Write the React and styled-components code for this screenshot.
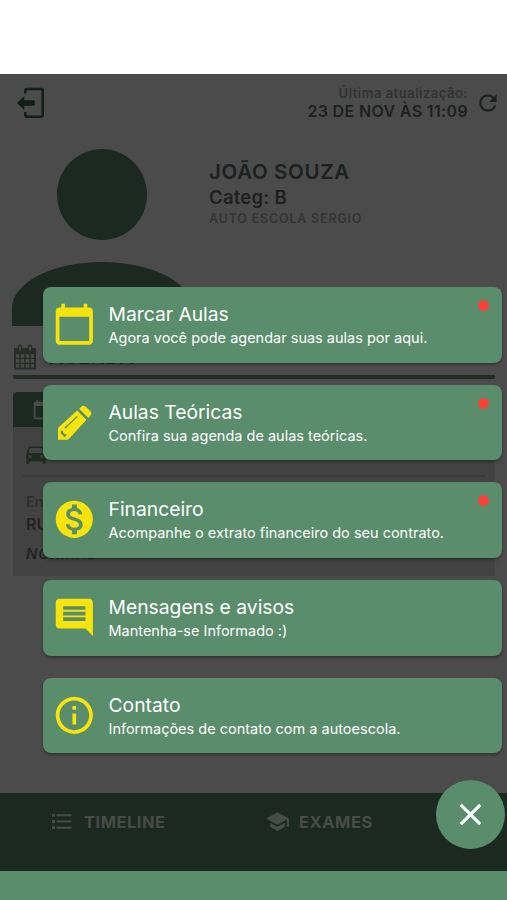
import React, { useState } from 'react';
import styled, { createGlobalStyle } from 'styled-components';
import {
    MdCalendarToday,
    MdMonetizationOn,
    MdInsertComment,
    MdInfoOutline,
    MdRefresh,
    MdSchool,
    MdDirectionsCar,
    MdClose,
} from 'react-icons/md';

const ExitIcon = () => (
    <svg width='28' height='32' viewBox='0 0 28 32'>
        <path
            d='M8.300 6.500V4a2 2 0 0 1 2-2h13.400a2 2 0 0 1 2 2v23.700a2 2 0 0 1-2 2H10.300a2 2 0 0 1-2-2V25'
            fill='none'
            stroke='#111f17'
            strokeWidth='2.6'
        />
        <path
            d='M0 16L7.200 9V13.200H17.700v5.600H7.200V23z'
            fill='#111f17'
        />
    </svg>
);

const CalendarGridIcon = () => (
    <svg width='24' height='26' viewBox='0 0 24 26'>
        <path
            d='M2 5h20v19.500h-20z'
            fill='none'
            stroke='#272c27'
            strokeWidth='2'
            strokeLinejoin='round'
        />
        <path
            d='M2 9.500h20M2 14.400h20M2 19.400h20M7 9v15M12 9v15M17 9v15'
            stroke='#272c27'
            strokeWidth='1.4'
        />
        <path d='M2 5h20v4H2z' fill='#272c27' />
        <path
            d='M7 2.800v3M17 2.800v3'
            stroke='#272c27'
            strokeWidth='4.600'
            strokeLinecap='round'
        />
        <path
            d='M7 3v3M17 3v3'
            stroke='#4b4b4b'
            strokeWidth='1.8'
            strokeLinecap='round'
        />
    </svg>
);

const ListIcon = () => (
    <svg width='20' height='17' viewBox='0 0 20 17'>
        <path
            d='M0 2.200h3M0 8.500h3M0 14.800h3'
            stroke='#474c48'
            strokeWidth='3'
        />
        <path
            d='M4.500 2.200h15M4.500 8.500h15M4.500 14.800h15'
            stroke='#474c48'
            strokeWidth='2'
        />
    </svg>
);

const PencilIcon = ({ size }) => (
    <svg width={size} height={size} viewBox='0 0 106 106'>
        <path
            d='M61 17L89 45L38 101Q35 105 31 105H3V75Q3 70 6 67z'
            fill='currentColor'
        />
        <path
            d='M67 11L75 4Q81 0 87 5L101 19Q107 25 102 31L95 39z'
            fill='currentColor'
        />
        <path
            d='M25 69L61 35'
            stroke='#5a8d6c'
            strokeWidth='3.5'
            strokeLinecap='round'
        />
        <path
            d='M11 79L17 77L20 86L29 89L27 95L21 97L18 91L12 88z'
            fill='#5a8d6c'
        />
    </svg>
);

const MENU_ITEMS = [
    {
        icon: MdCalendarToday,
        size: 44.6,
        title: 'Marcar Aulas',
        text: 'Agora você pode agendar suas aulas por aqui.',
        unread: true,
    },
    {
        icon: PencilIcon,
        size: 35,
        title: 'Aulas Teóricas',
        text: 'Confira sua agenda de aulas teóricas.',
        unread: true,
    },
    {
        icon: MdMonetizationOn,
        size: 44.6,
        title: 'Financeiro',
        text: 'Acompanhe o extrato financeiro do seu contrato.',
        unread: true,
    },
    {
        icon: MdInsertComment,
        size: 44.6,
        title: 'Mensagens e avisos',
        text: 'Mantenha-se Informado :)',
    },
    {
        icon: MdInfoOutline,
        size: 44.6,
        title: 'Contato',
        text: 'Informações de contato com a autoescola.',
    },
];

const App = () => {
    const [menuOpen, setMenuOpen] = useState(true);

    return (
        <>
            <GlobalStyle />
            <Screen>
                <StatusBar />
                <Content>
                    <Header>
                        <ExitIcon />
                        <Update>
                            <UpdateText>
                                <UpdateLabel>Última atualização:</UpdateLabel>
                                <UpdateDate>23 DE NOV ÀS 11:09</UpdateDate>
                            </UpdateText>
                            <MdRefresh size={26} />
                        </Update>
                    </Header>
                    <Profile>
                        <Avatar>
                            <AvatarHead />
                            <AvatarBody />
                        </Avatar>
                        <ProfileInfo>
                            <Name>JOÃO SOUZA</Name>
                            <Category>Categ: B</Category>
                            <School>AUTO ESCOLA SERGIO</School>
                        </ProfileInfo>
                    </Profile>
                    <SectionTitle>
                        <CalendarGridIcon />
                        <span>AGENDA</span>
                    </SectionTitle>
                    <LessonCard>
                        <LessonHeader>
                            <MdCalendarToday size={21} />
                        </LessonHeader>
                        <LessonType>
                            <MdDirectionsCar size={26} />
                        </LessonType>
                        <LessonBody>
                            <LessonLabel>Endereço:</LessonLabel>
                            <LessonPlace>RUA</LessonPlace>
                            <LessonStatus>NORMAL</LessonStatus>
                        </LessonBody>
                    </LessonCard>
                </Content>
                <TabBar>
                    <Tab $width='213px'>
                        <ListIcon />
                        <TabLabel $gap='12px'>TIMELINE</TabLabel>
                    </Tab>
                    <Tab $width='214px'>
                        <MdSchool size={25} />
                        <TabLabel $gap='9px'>EXAMES</TabLabel>
                    </Tab>
                </TabBar>
                <BottomStrip />

                {menuOpen ? (
                    <Menu>
                        {MENU_ITEMS.map((item) => (
                            <MenuItem key={item.title}>
                                <MenuIcon>
                                    <item.icon size={item.size} />
                                </MenuIcon>
                                <MenuText>
                                    <MenuTitle>{item.title}</MenuTitle>
                                    <MenuDescription>
                                        {item.text}
                                    </MenuDescription>
                                </MenuText>
                                {item.unread ? <UnreadDot /> : null}
                            </MenuItem>
                        ))}
                    </Menu>
                ) : null}
                <CloseButton onClick={() => setMenuOpen(!menuOpen)}>
                    <MdClose size={37} />
                </CloseButton>
            </Screen>
        </>
    );
};

export default App;

const GlobalStyle = createGlobalStyle`
    * {
        box-sizing: border-box;
    }

    body {
        margin: 0;
        font-family: Inter, 'Liberation Sans', sans-serif;
    }

    svg {
        display: block;
        flex-shrink: 0;
    }
`;

const Screen = styled.div`
    position: relative;
    display: flex;
    flex-direction: column;
    width: 507px;
    height: 900px;
    overflow: hidden;
    background: #4b4b4b;
`;

const StatusBar = styled.div`
    height: 74px;
    background: #fff;
`;

const Content = styled.main`
    height: 719px;
    padding: 0 12px 0 13px;
`;

const Header = styled.header`
    display: flex;
    justify-content: space-between;
    height: 75px;
    padding: 13px 0 0 4px;
`;

const Update = styled.div`
    display: flex;
    align-items: flex-start;
    margin-right: -6px;
    color: #1c211e;

    svg {
        margin: 3px 0 0 7px;
    }
`;

const UpdateText = styled.div`
    text-align: right;
    font-weight: 600;
`;

const UpdateLabel = styled.div`
    margin-top: -3px;
    font-size: 13px;
    line-height: 18px;
    letter-spacing: 0.5px;
    color: #323232;
`;

const UpdateDate = styled.div`
    font-size: 16px;
    line-height: 18px;
    letter-spacing: 0.35px;
`;

const Profile = styled.section`
    display: flex;
    height: 177px;
`;

const Avatar = styled.div`
    display: flex;
    flex-direction: column;
    align-items: center;
    justify-content: space-between;
    width: 180px;
    margin-left: -1px;
`;

const AvatarHead = styled.div`
    width: 90px;
    height: 91px;
    border-radius: 50%;
    background: #1c2920;
`;

const AvatarBody = styled.div`
    width: 180px;
    height: 64px;
    border-radius: 50% 50% 0 0 / 72% 72% 0 0;
    background: #1c2920;
`;

const ProfileInfo = styled.div`
    padding: 9px 0 0 17px;
`;

const Name = styled.div`
    font-size: 20.5px;
    line-height: 27px;
    font-weight: 600;
    letter-spacing: 0.65px;
    color: #1c211e;
`;

const Category = styled.div`
    font-size: 18.5px;
    line-height: 24px;
    font-weight: 600;
    letter-spacing: 0.25px;
    color: #1f1f1f;
`;

const School = styled.div`
    margin-top: 1px;
    font-size: 12.5px;
    line-height: 18px;
    font-weight: 600;
    letter-spacing: 0.8px;
    color: #343434;
`;

const SectionTitle = styled.div`
    display: flex;
    align-items: center;
    gap: 12px;
    height: 53px;
    padding-top: 12px;
    border-bottom: 4px solid #242c21;
    border-radius: 2px;
    font-size: 20px;
    font-weight: 700;
    color: #1c2920;
`;

const LessonCard = styled.section`
    height: 184px;
    margin-top: 13px;
    background: #424242;
`;

const LessonHeader = styled.div`
    display: flex;
    align-items: center;
    height: 35px;
    padding-left: 19px;
    border-radius: 5px 5px 0 0;
    background: #1c2920;
    color: #4b4b4b;
`;

const LessonType = styled.div`
    height: 50px;
    margin: 0 10px;
    padding-top: 14px;
    border-bottom: 2px solid #393939;
    color: #1e2c1e;
`;

const LessonBody = styled.div`
    padding: 14px 13px 0;
    line-height: 22px;
    color: #222;
`;

const LessonLabel = styled.div`
    font-size: 14.5px;
    font-weight: 500;
    color: #2d2d2d;
`;

const LessonPlace = styled.div`
    font-size: 16px;
    font-weight: 600;
`;

const LessonStatus = styled.div`
    margin-top: 8px;
    font-size: 15px;
    font-weight: 600;
    font-style: italic;
    letter-spacing: 0.8px;
`;

const TabBar = styled.nav`
    display: flex;
    height: 77.5px;
    padding: 16px 0 0 52px;
    background: #1c2920;
`;

const Tab = styled.div`
    display: flex;
    align-items: center;
    width: ${({ $width }) => $width};
    height: 25px;
    color: #474c48;
`;

const TabLabel = styled.span`
    margin-left: ${({ $gap }) => $gap};
    font-size: 16.5px;
    font-weight: 700;
    letter-spacing: 0.5px;
`;

const BottomStrip = styled.div`
    flex: 1;
    background: #5a8d6c;
`;

const Menu = styled.div`
    position: absolute;
    top: 287px;
    left: 43px;
    right: 5px;
    display: flex;
    flex-direction: column;
    gap: 22px;
`;

const MenuItem = styled.div`
    position: relative;
    display: flex;
    align-items: center;
    height: 75.7px;
    border-radius: 8px;
    background: #5a8d6c;
    box-shadow: 0 2px 3px rgba(0, 0, 0, 0.3);
    color: #fff;
    cursor: pointer;
`;

const MenuIcon = styled.div`
    display: flex;
    justify-content: center;
    width: 62px;
    padding-bottom: 1px;
    color: #f7e40c;
`;

const MenuText = styled.div`
    padding-left: 3.5px;
    white-space: nowrap;
`;

const MenuTitle = styled.div`
    font-size: 19.3px;
    line-height: 26px;
`;

const MenuDescription = styled.div`
    font-size: 14.5px;
    line-height: 22px;
`;

const UnreadDot = styled.span`
    position: absolute;
    top: 13px;
    right: 13px;
    width: 11px;
    height: 11px;
    border-radius: 50%;
    background: #f64538;
`;

const CloseButton = styled.button`
    position: absolute;
    top: 780px;
    right: 2.5px;
    display: flex;
    align-items: center;
    justify-content: center;
    width: 69px;
    height: 69px;
    padding: 0;
    border: none;
    border-radius: 50%;
    background: #5a8d6c;
    color: #fff;
    cursor: pointer;
`;
